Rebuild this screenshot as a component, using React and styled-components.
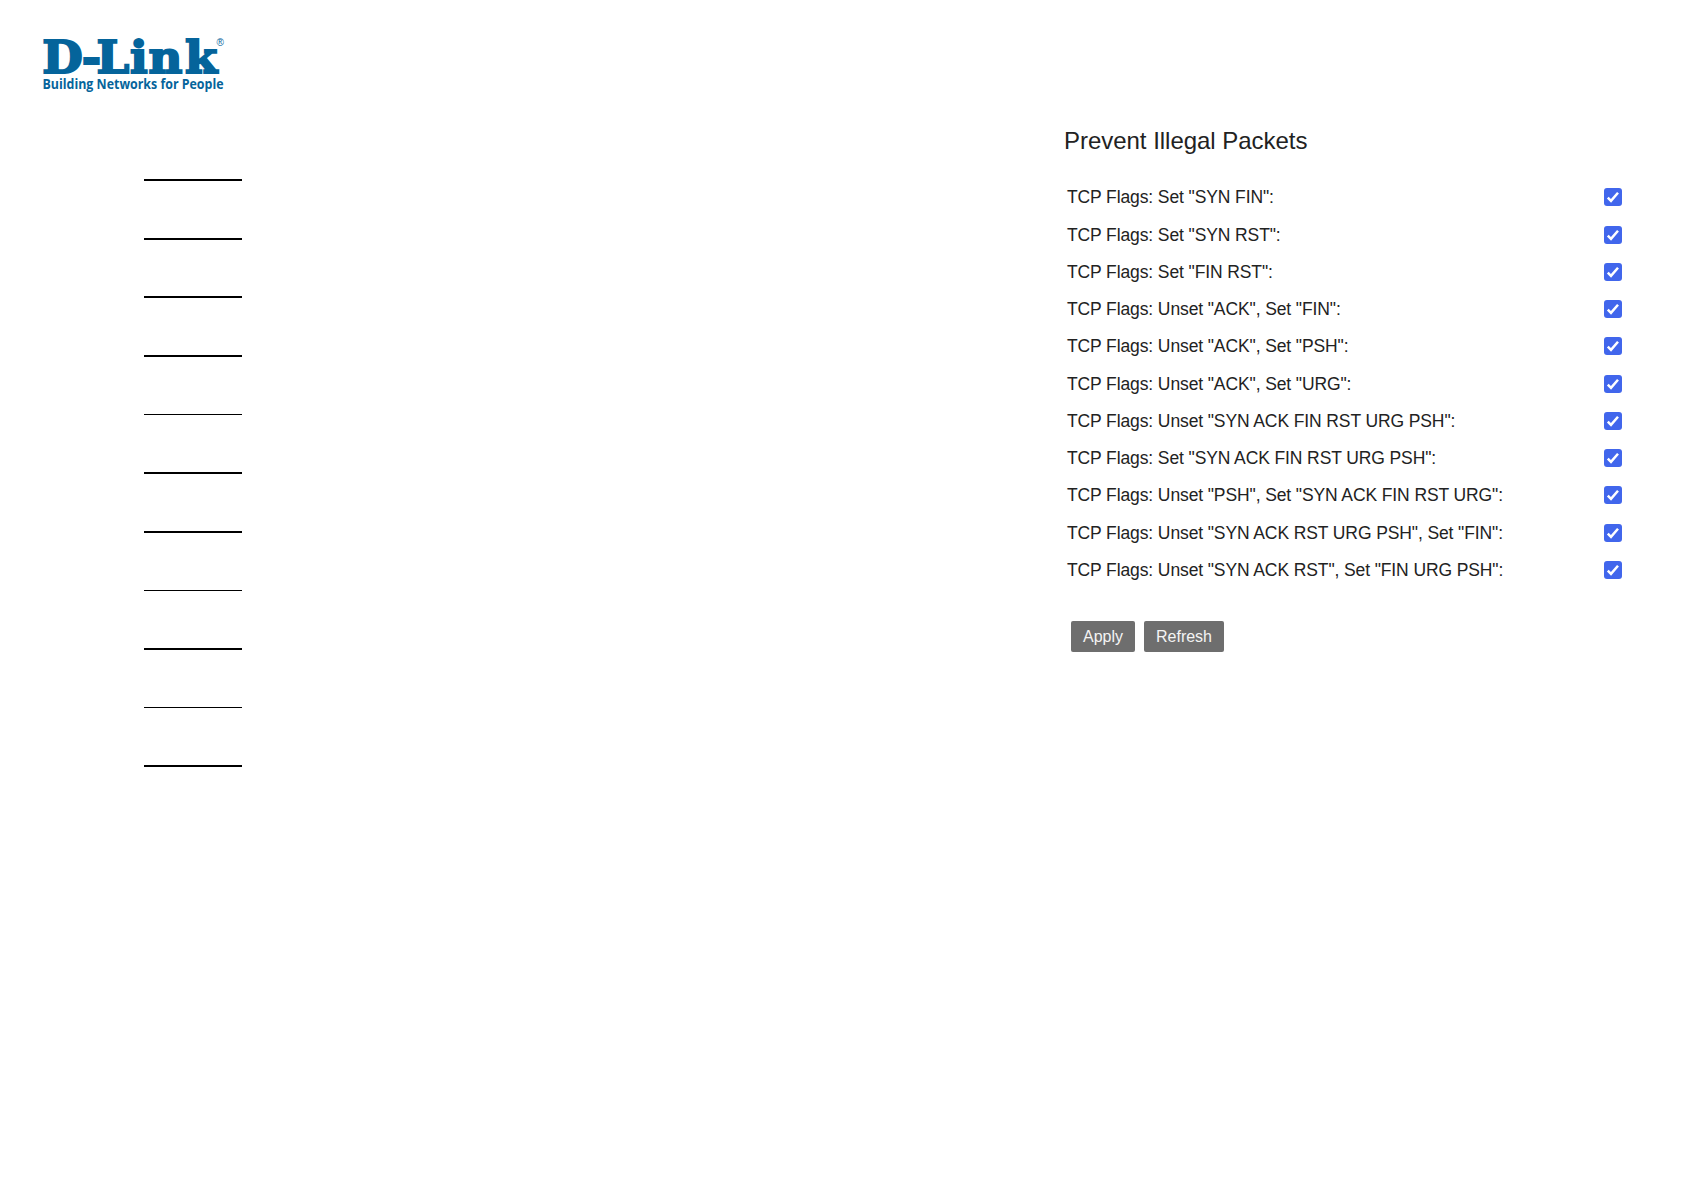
import React from 'react'
import styled, { createGlobalStyle } from 'styled-components';

const flags = [
    'TCP Flags: Set "SYN FIN":',
    'TCP Flags: Set "SYN RST":',
    'TCP Flags: Set "FIN RST":',
    'TCP Flags: Unset "ACK", Set "FIN":',
    'TCP Flags: Unset "ACK", Set "PSH":',
    'TCP Flags: Unset "ACK", Set "URG":',
    'TCP Flags: Unset "SYN ACK FIN RST URG PSH":',
    'TCP Flags: Set "SYN ACK FIN RST URG PSH":',
    'TCP Flags: Unset "PSH", Set "SYN ACK FIN RST URG":',
    'TCP Flags: Unset "SYN ACK RST URG PSH", Set "FIN":',
    'TCP Flags: Unset "SYN ACK RST", Set "FIN URG PSH":',
];

// rule thickness and the gap below it
const rules = [
    [2, 57], [2, 56], [2, 57], [2, 57], [1, 57], [2, 57],
    [2, 57], [1, 57], [2, 57], [1, 57], [2, 0],
];

function Logo() {
    return (
        <LogoSvg viewBox="0 0 188 60" role="img" aria-label="D-Link">
            <text className="brand" x="0.2 37.5 51.5 83 100.5 134.8" y="37" transform="scale(1.06 1)">D-Link</text>
            <text className="tagline" x="0.5" y="52.7" textLength="181" lengthAdjust="spacingAndGlyphs">Building Networks for People</text>
            <text className="mark" x="174.5" y="9.5">®</text>
        </LogoSvg>
    )
}

function Check() {
    return (
        <CheckBox type="button" role="checkbox" aria-checked="true">
            <svg viewBox="0 0 18 18">
                <path d="M3.8 9.6 L7 12.8 L14 4.8" />
            </svg>
        </CheckBox>
    )
}

function App() {
    return (
        <Page>
            <GlobalStyle />
            <Side>
                <Logo />
                <RuleList>
                    {rules.map(([size, gap], i) => (
                        <Rule key={i} $size={size} $gap={gap} />
                    ))}
                </RuleList>
            </Side>
            <Panel>
                <h1>Prevent Illegal Packets</h1>
                <FlagList>
                    {flags.map((flag) => (
                        <FlagRow key={flag}>
                            <span>{flag}</span>
                            <Check />
                        </FlagRow>
                    ))}
                </FlagList>
                <Actions>
                    <Button $width="64px">Apply</Button>
                    <Button $width="80px">Refresh</Button>
                </Actions>
            </Panel>
        </Page>
    )
}

const GlobalStyle = createGlobalStyle`
    *{
        box-sizing: border-box;
        margin: 0;
        padding: 0;
    }
    body{
        background: #fff;
        font-family: "Liberation Sans", Arial, sans-serif;
    }
`;

const Page = styled.main`
    width: 1684px;
    height: 1191px;
    display: flex;
    justify-content: space-between;
    overflow: hidden;
    background: #fff;
`;

const Side = styled.aside`
    width: 260px;
    padding: 36px 0 0 42px;
`;

const LogoSvg = styled.svg`
    display: block;
    width: 188px;
    height: 60px;
    overflow: visible;
    fill: #05649b;

    .brand{
        font: bold 44px "DejaVu Serif", serif;
        stroke: #05649b;
        stroke-width: 2px;
    }
    .tagline{
        font: bold 14px "Open Sans", sans-serif;
    }
    .mark{
        font: 10px "Liberation Sans", sans-serif;
    }
`;

const RuleList = styled.div`
    padding: 83px 0 0 102px;
`;

const Rule = styled.div`
    width: 98px;
    height: ${(props) => props.$size}px;
    margin-bottom: ${(props) => props.$gap}px;
    background: #000;
`;

const Panel = styled.section`
    width: 620px;
    padding: 127px 62px 0 0;

    h1{
        font-size: 24px;
        font-weight: 400;
        line-height: 28px;
        color: #222;
        letter-spacing: -.03px;
    }
`;

const FlagList = styled.div`
    padding: 23.7px 0 0 3px;
`;

const FlagRow = styled.div`
    height: 37.27px;
    display: flex;
    align-items: center;
    justify-content: space-between;
    font-size: 17.5px;
    letter-spacing: -.11px;
    white-space: nowrap;
    color: #222;

    span{
        padding-top: 1px;
    }
`;

const CheckBox = styled.button`
    width: 18px;
    height: 18px;
    border: none;
    border-radius: 3px;
    background: #4166ec;

    svg{
        display: block;
        width: 18px;
        height: 18px;
        fill: none;
        stroke: #fff;
        stroke-width: 2.5px;
    }
`;

const Actions = styled.div`
    display: flex;
    gap: 9px;
    padding: 32.5px 0 0 7px;
`;

const Button = styled.button`
    width: ${(props) => props.$width};
    height: 31px;
    border: none;
    border-radius: 2px;
    background: #6e6e6e;
    color: #f4f4f4;
    font-family: inherit;
    font-size: 16px;
`;

export default App;
